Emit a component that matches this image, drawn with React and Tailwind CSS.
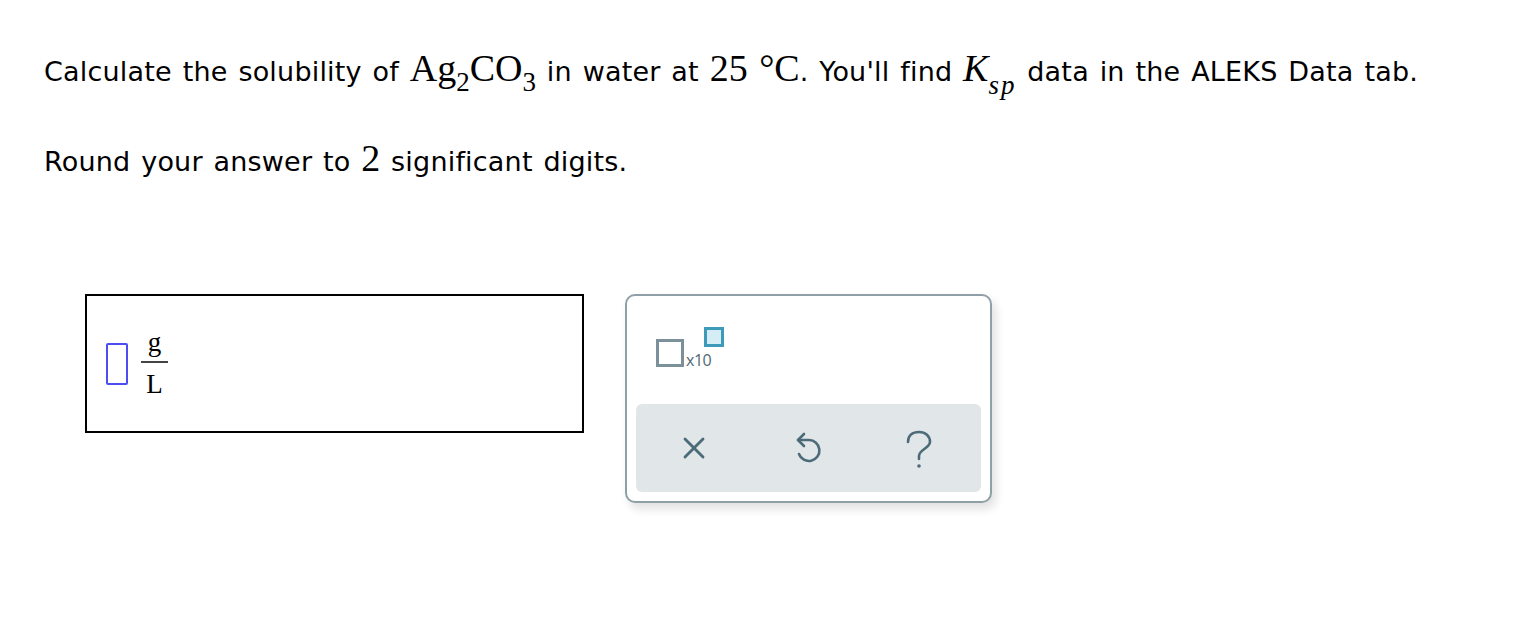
import { X } from 'lucide-react';

const serif = "font-['Liberation_Serif','Times_New_Roman',serif]";
const iconColor = '#4b6b78';

function Sub({ children, low }) {
  return (
    <span className={`relative text-[27px] leading-none ${low ? 'top-[13px] tracking-[2px]' : 'top-[10px]'}`}>
      {children}
    </span>
  );
}

export default function App() {
  return (
    <div className="min-h-screen bg-white font-['DejaVu_Sans','Verdana',sans-serif] text-black">
      <div className="px-[44px] pt-[44px]">
        <p className="text-[27px] leading-[48px] tracking-[0.2px] [word-spacing:2px]">
          Calculate the solubility of{' '}
          <span className={`${serif} text-[38px] tracking-normal`}>
            Ag<Sub>2</Sub>CO<Sub>3</Sub>
          </span>{' '}
          in water at <span className={`${serif} text-[38px] tracking-normal`}>25 °C</span>. You'll find{' '}
          <span className={`${serif} text-[38px] italic tracking-normal`}>
            K<Sub low>sp</Sub>
          </span>{' '}
          data in the ALEKS Data tab.
        </p>

        <p className="mt-[38px] text-[27px] leading-[48px] tracking-[0.2px] [word-spacing:2px]">
          Round your answer to <span className={`${serif} text-[38px] tracking-normal`}>2</span> significant digits.
        </p>
      </div>

      <div className="mt-[108px] flex items-start pl-[85px]">
        <div className="flex h-[139px] w-[499px] items-center border-2 border-black pl-[19px]">
          <div className="h-[42px] w-[22px] rounded-[2px] border-2 border-[#4d4df5]" />
          <div className={`${serif} ml-[13px] flex flex-col items-center text-[27px] leading-none`}>
            <span className="pb-[5px]">g</span>
            <span className="h-[2px] w-[27px] bg-[#444]" />
            <span className="pt-[8px]">L</span>
          </div>
        </div>

        <div className="ml-[41px] flex h-[209px] w-[367px] flex-col rounded-[10px] border-2 border-[#8fa0a8] bg-white px-[9px] pb-[9px] shadow-[4px_6px_10px_rgba(0,0,0,0.12)]">
          <div className="flex flex-1 items-start pl-[20px] pt-[31px]">
            <div className="mt-[12px] h-[28px] w-[28px] border-[3px] border-[#7b9099]" />
            <span className="mt-[25px] ml-[2px] font-['Open_Sans','Liberation_Sans',sans-serif] text-[16px] leading-none tracking-[-0.5px] text-[#4f6873]">x10</span>
            <div className="ml-[-7px] h-[20px] w-[20px] border-[3px] border-[#3d9ab8] bg-[#d5eef6]" />
          </div>
          <div className="grid h-[88px] grid-cols-3 items-center justify-items-center rounded-[6px] bg-[#e1e6e9]">
            <X className="h-[36px] w-[36px]" color={iconColor} strokeWidth={1.9} />
            <svg width="26" height="34" viewBox="0 0 26 34" fill="none" stroke={iconColor} strokeWidth="2.6" strokeLinecap="round" strokeLinejoin="round" className="mb-[2px]">
              <path d="M8 4 L2 10 L8 16" />
              <path d="M2 10 H13 A10.5 10.5 0 1 1 3 24" />
            </svg>
            <svg width="30" height="40" viewBox="0 0 30 40" fill="none" stroke={iconColor} strokeWidth="2.6" strokeLinecap="round" className="ml-[-10px] mt-[4px]">
              <path d="M4 12 C4 5.5 8.5 2 15 2 C21.5 2 26 6 26 12 C26 18 15 19.5 15 26 L15 29" />
              <circle cx="15" cy="36" r="1.8" fill={iconColor} stroke="none" />
            </svg>
          </div>
        </div>
      </div>
    </div>
  );
}
